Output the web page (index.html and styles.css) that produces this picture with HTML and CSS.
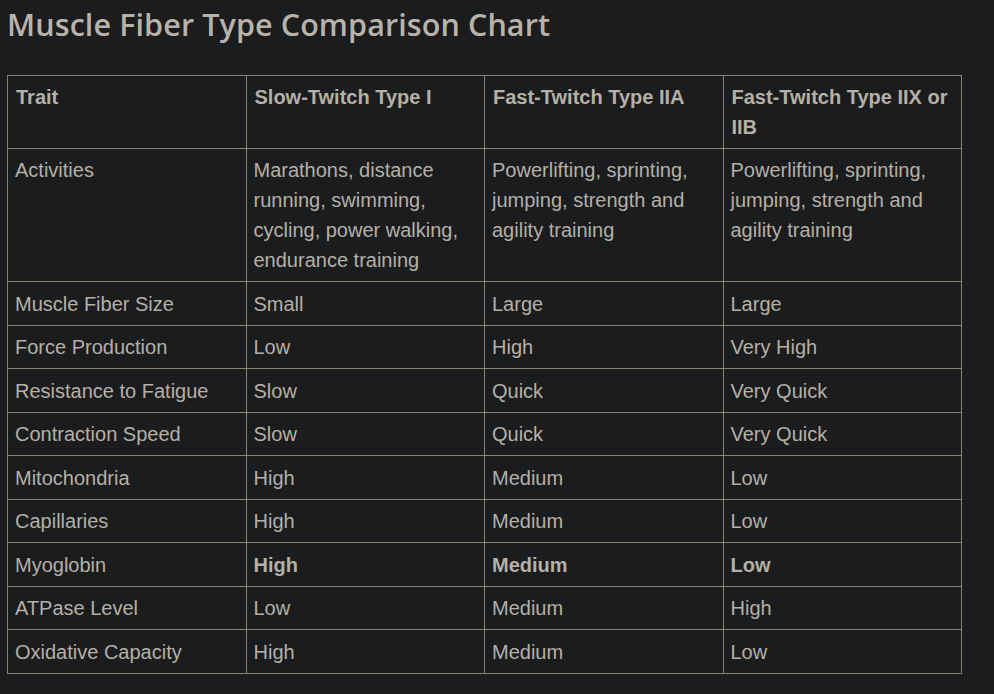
FILE: index.html
```html
<!DOCTYPE html>
<html>
<head>
<meta charset="utf-8">
<link rel="stylesheet" href="styles.css">
</head>
<body>
<h2 class="title">Muscle Fiber Type Comparison Chart</h2>
<table class="chart">
<thead>
<tr><th>Trait</th><th>Slow-Twitch Type I</th><th>Fast-Twitch Type IIA</th><th>Fast-Twitch Type IIX or IIB</th></tr>
</thead>
<tbody>
<tr><td>Activities</td><td>Marathons, distance running, swimming, cycling, power walking, endurance training</td><td>Powerlifting, sprinting, jumping, strength and agility training</td><td>Powerlifting, sprinting, jumping, strength and agility training</td></tr>
<tr><td>Muscle Fiber Size</td><td>Small</td><td>Large</td><td>Large</td></tr>
<tr><td>Force Production</td><td>Low</td><td>High</td><td>Very High</td></tr>
<tr><td>Resistance to Fatigue</td><td>Slow</td><td>Quick</td><td>Very Quick</td></tr>
<tr><td>Contraction Speed</td><td>Slow</td><td>Quick</td><td>Very Quick</td></tr>
<tr><td>Mitochondria</td><td>High</td><td>Medium</td><td>Low</td></tr>
<tr><td>Capillaries</td><td>High</td><td>Medium</td><td>Low</td></tr>
<tr><td>Myoglobin</td><td><strong>High</strong></td><td><strong>Medium</strong></td><td><strong>Low</strong></td></tr>
<tr><td>ATPase Level</td><td>Low</td><td>Medium</td><td>High</td></tr>
<tr><td>Oxidative Capacity</td><td>High</td><td>Medium</td><td>Low</td></tr>
</tbody>
</table>
</body>
</html>
```
FILE: styles.css
```css
html, body {
  background: #1b1c1e;
}
body {
  margin: 0;
  padding: 0 7px;
  color: #b5b0a6;
  font-family: "Liberation Sans", Arial, sans-serif;
}
.title {
  font-family: "Open Sans", "Noto Sans", sans-serif;
  font-weight: 600;
  font-size: 30.5px;
  line-height: 48px;
  margin: 0 0 27px 0;
  letter-spacing: 0.1px;
  color: #b8b3aa;
}
.chart {
  border-collapse: collapse;
  width: 955px;
  table-layout: fixed;
  font-size: 20px;
  line-height: 30px;
}
.chart th, .chart td {
  border: 1px solid #8c8273;
  padding: 6px 7px;
  vertical-align: top;
  text-align: left;
}
.chart th {
  font-weight: bold;
  padding-left: 8px;
}
.chart tbody tr:not(:first-child) td {
  padding-top: 6.5px;
  padding-bottom: 6px;
}
.chart strong {
  font-weight: bold;
}
```
